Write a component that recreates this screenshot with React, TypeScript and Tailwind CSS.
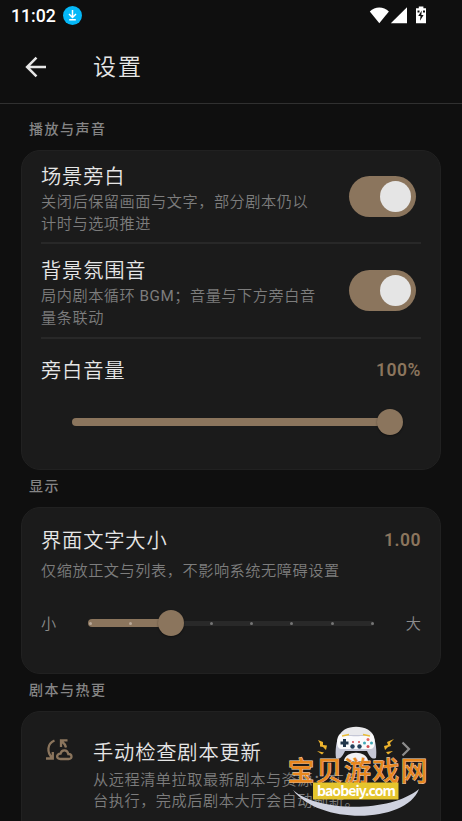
import { useState } from "react"
import type { ReactNode } from "react"
import { clsx } from "clsx"

const TICKS = [0, 1, 2, 3, 4, 5, 6, 7]

function StatusBar() {
    return (
        <div className="flex h-8 items-center justify-between pl-[11px] pr-[36px] text-white">
            <div className="flex items-center">
                <span className="w-[46px] font-[Roboto] text-[17.7px] font-medium leading-8 whitespace-nowrap">11:02</span>
                <svg className="-mt-[1px] ml-[6px] h-[19px] w-[19px]" viewBox="0 0 19 19">
                    <circle cx="9.5" cy="9.5" r="9.5" fill="#05b8f8" />
                    <path d="M9.5 4v7M6 8l3.5 3.5L13 8M6.2 13.8h6.6" fill="none" stroke="#fff" strokeWidth="1.5" />
                </svg>
            </div>
            <svg className="-mt-[2px] h-[18px] w-[57px]" viewBox="0 0 57 18">
                <path d="M0.8 5.6C6 0 14.5 0 19.9 5.6L10.3 17.3z" fill="#fff" />
                <path d="M21.8 17.3L38 1.2V17.3z" fill="#fff" />
                <path d="M47 2.3h2.8V0.5h4.6v1.8h2.8v15h-10.2z" fill="#fff" />
                <path d="M52.8 4.6l-3.6 5.5h2.3l-.5 4.6 3.6-5.7h-2.3zM48.5 4.5h2v2h-2zM54 4.5h2v2h-2z" fill="#0f0f0f" />
            </svg>
        </div>
    )
}

function Header() {
    return (
        <div className="flex h-[72px] items-center border-b border-[#303030] pl-6">
            <svg className="-mt-[2px] h-6 w-6" viewBox="0 0 24 24" fill="none" stroke="#e6e6e6" strokeWidth="2.5">
                <path d="M22 12H3.4M12.5 2.6L3.1 12l9.4 9.4" />
            </svg>
            <h1 className="ml-[45px] pt-[1px] text-[23px] font-[350] leading-8 tracking-[2px] text-[#e6e6e6]">设置</h1>
        </div>
    )
}

function SectionLabel({ children }: { children: ReactNode }) {
    return (
        <h2 className="flex h-[37px] items-center pl-[29px] pb-[4px] text-[14px] font-medium tracking-[1.5px] text-[#858585]">
            {children}
        </h2>
    )
}

function Card({ className, children }: { className?: string; children: ReactNode }) {
    return (
        <section className={clsx("mx-[21px] rounded-[19px] border border-[#212121] bg-[#1b1b1b] px-[19px]", className)}>
            {children}
        </section>
    )
}

function Title({ children }: { children: ReactNode }) {
    return <div className="text-[20.3px] font-[350] leading-7 tracking-[0.8px] text-[#e6e6e6] whitespace-nowrap">{children}</div>
}

function Toggle() {
    const [on, setOn] = useState(true)

    return (
        <button
            role="switch"
            aria-checked={on}
            onClick={() => setOn(!on)}
            className={clsx(
                "mr-[5px] flex h-[41px] w-[67px] shrink-0 items-center rounded-full px-[5px]",
                on ? "justify-end bg-[#8b755d]" : "justify-start bg-[#333333]",
            )}
        >
            <span className="h-[31px] w-[31px] rounded-full bg-[#e5e5e5]" />
        </button>
    )
}

function Description({ children }: { children: ReactNode }) {
    return (
        <div className="text-[15.2px] font-[350] leading-[21.3px] tracking-[0.53px] text-[#7d7d7d] whitespace-nowrap">
            {children}
        </div>
    )
}

function ToggleRow({ title, children }: { title: string; children: ReactNode }) {
    return (
        <div className="flex h-full items-center justify-between">
            <div className="pt-[5px]">
                <Title>{title}</Title>
                <div className="pt-[1px]">
                    <Description>{children}</Description>
                </div>
            </div>
            <Toggle />
        </div>
    )
}

function Thumb() {
    return <span className="-mx-[13px] h-[26px] w-[26px] shrink-0 rounded-full bg-[#8b755d] shadow-[0_1px_2px_rgba(0,0,0,0.4)] z-10" />
}

// Gamepad logo with site name, floats over the last card
function SiteBadge() {
    return (
        <svg className="absolute left-[280px] top-[720px] h-[101px] w-[160px]" viewBox="0 0 160 101">
            <path d="M13 70C38 92 110 93 139 69C126 104 39 105 13 70z" fill="#cfd2df" />
            <path d="M59 18C60 3 92 3 94 18z" fill="#e9e9ec" />
            <path d="M60 15C56 19 55 32 56 38C60 40 62 37 65 31H87C90 37 92 40 96 38C97 32 96 19 92 15z" fill="#c5c7d6" />
            <path d="M60 14C66 17 86 17 92 14C96 17 96 29 91 29H61C56 29 56 17 60 14z" fill="#fafafc" />
            <path d="M64 41C65 30 87 30 88 41z" fill="#f1f1f3" />
            <path d="M62 16l7-1.500M83 14.500l7 1.500" stroke="#e8bd37" strokeWidth="1.5" />
            <path d="M64.500 19v8M60.500 23h8" stroke="#21364a" strokeWidth="3" />
            <path d="M72 22h2M78 22h2" stroke="#d24d50" strokeWidth="1.5" />
            <circle cx="72.500" cy="26.500" r="2.200" fill="#23405a" />
            <circle cx="79.500" cy="26.500" r="2.200" fill="#23405a" />
            <circle cx="88" cy="19.500" r="1.5" fill="#e66363" />
            <circle cx="88" cy="26.500" r="1.5" fill="#d24d50" />
            <circle cx="84.500" cy="23" r="1.5" fill="#43a8b7" />
            <circle cx="91.500" cy="23" r="1.5" fill="#43a8b7" />
            <path
                d="M38 20l5 2 0 3 4 .5-1 4.500-3-3-3-.5 0-3zM37 31l7 1.500-2 2zM114 19l-7 3 1 3-4 1 1 4 3-3 3-1-1-3zM113 31l-7 1 2 2.500z"
                fill="#edb32d"
            />
            <text
                x="7.5"
                y="60.5"
                textLength="140"
                fill="#e8871e"
                stroke="#f4dcc0"
                strokeWidth="0.8"
                paintOrder="stroke"
                className="font-['Noto_Sans_CJK_SC'] text-[27px] font-medium"
            >
                宝贝游戏网
            </text>
            <rect x="33" y="62.5" width="85.500" height="17" fill="#e5c52d" />
            <text x="37" y="75.500" textLength="79" fill="#fff" className="font-['Noto_Sans_CJK_SC'] text-[14px] font-bold">
                baobeiy.com
            </text>
        </svg>
    )
}

export default function App() {
    return (
        <div className="relative h-[821px] w-[462px] overflow-hidden bg-[#0f0f0f] font-[Roboto,'Noto_Sans_CJK_SC',sans-serif]">
            <StatusBar />
            <Header />

            <div className="pt-[9px]">
                <SectionLabel>播放与声音</SectionLabel>
            </div>
            <Card className="h-[320px]">
                <div className="h-[93px] border-b-2 border-[#282828]">
                    <ToggleRow title="场景旁白">
                        <p>关闭后保留画面与文字，部分剧本仍以</p>
                        <p>计时与选项推进</p>
                    </ToggleRow>
                </div>
                <div className="h-[95px] border-b-2 border-[#282828]">
                    <ToggleRow title="背景氛围音">
                        <p>
                            局内剧本循环 <span className="font-normal">BGM</span>；音量与下方旁白音
                        </p>
                        <p>量条联动</p>
                    </ToggleRow>
                </div>
                <div className="flex h-[63px] items-center justify-between">
                    <Title>旁白音量</Title>
                    <span className="pb-[1px] text-[17.5px] font-semibold tracking-[0.5px] text-[#8b755d]">100%</span>
                </div>
                <div className="ml-[31px] mr-[31px] mt-[7px] flex h-[26px] items-center">
                    <div className="h-2 grow rounded-l-full bg-[#8b755d]" />
                    <Thumb />
                </div>
            </Card>

            <SectionLabel>显示</SectionLabel>
            <Card className="h-[167px] pt-[19px]">
                <div className="flex items-center justify-between">
                    <Title>界面文字大小</Title>
                    <span className="pb-[1px] text-[17.5px] font-semibold tracking-[0.5px] text-[#8b755d]">1.00</span>
                </div>
                <div className="mt-[6px]">
                    <Description>仅缩放正文与列表，不影响系统无障碍设置</Description>
                </div>
                <div className="mt-[28px] flex h-[26px] items-center text-[15.2px] font-[350] text-[#8c8c8c]">
                    <span className="w-[47px] pt-[2px]">小</span>
                    <div className="relative flex w-[286px] items-center">
                        <div className="h-2 w-[82.5px] rounded-l-full bg-[#8b755d]" />
                        <Thumb />
                        <div className="h-[5px] grow rounded-r-full bg-[#292929]" />
                        <div className="absolute left-[1px] right-0 flex justify-between">
                            {TICKS.map((tick) => (
                                <span
                                    key={tick}
                                    className={clsx("h-[3px] w-[3px] rounded-full", tick < 2 ? "bg-[#b8a898]" : "bg-[#757575]")}
                                />
                            ))}
                        </div>
                    </div>
                    <span className="ml-auto pt-[2px]">大</span>
                </div>
            </Card>

            <SectionLabel>剧本与热更</SectionLabel>
            <Card className="flex h-[150px] pt-[27px]">
                <svg className="ml-[5px] h-[24px] w-[28px] shrink-0" viewBox="0 0 28 24" fill="none" stroke="#8b755d" strokeWidth="2.3">
                    <path d="M8.500 1.500C1 4.500.500 13.500 6.500 19M0 19.500h6.800V13M21.500 1.300h-6.500v6.700M15.500 2C18.500 4.500 19.500 6 20 8.500" />
                    <path d="M14.500 20c-4.500 0-4.500-5.300 0-5.300 1-4.600 7-4.600 7.800.3 4.200 0 4.200 5 .4 5z" />
                </svg>
                <div className="ml-[19px]">
                    <Title>手动检查剧本更新</Title>
                    <div className="pt-[3px]">
                        <Description>
                            <p>从远程清单拉取最新剧本与资源；在后</p>
                            <p>台执行，完成后剧本大厅会自动刷新。</p>
                        </Description>
                    </div>
                </div>
                <svg className="ml-auto mr-[10px] mt-[2px] h-4 w-[10px] shrink-0" viewBox="0 0 10 16" fill="none" stroke="#8c8c8c" strokeWidth="2.2">
                    <path d="M1.500 1.500L8 8l-6.500 6.500" />
                </svg>
            </Card>
            <SiteBadge />
        </div>
    )
}
